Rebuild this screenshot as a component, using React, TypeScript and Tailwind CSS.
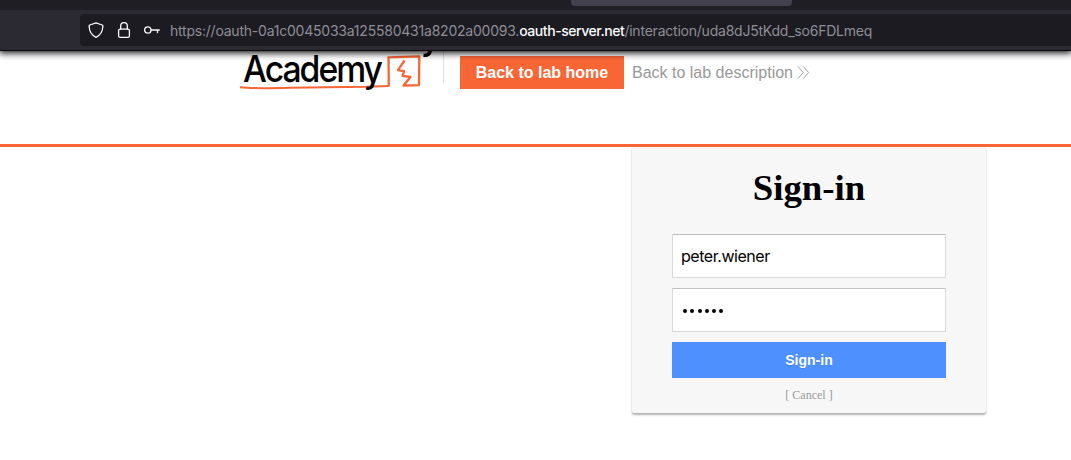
import React from "react";

function BrowserChrome() {
  return (
    <header className="relative z-10 h-[51px] border-b border-[#08080a] bg-[#2b2a33] shadow-[0_1px_7px_1px_rgba(0,0,0,0.95)]">
      <div className="h-[10px] bg-[#1f1e25] pl-[571px]">
        <div className="h-[6px] w-[221px] rounded-b-[4px] bg-[#42414d]" />
      </div>
      <div className="mt-1 ml-20 flex h-8 items-center rounded-l-[4px] bg-[#1c1b22] pl-2">
        <svg className="h-4 w-4 shrink-0" viewBox="0 0 16 16" fill="none" stroke="#fbfbfe" strokeWidth="1.3" strokeLinejoin="round">
          <path d="M8 .8 14.200 3c.5.2.7.5.7 1C14.700 9 12.300 13.300 8 15.300 3.700 13.300 1.300 9 1.100 4c0-.5.2-.8.7-1Z" />
        </svg>
        <svg className="ml-3 h-4 w-4 shrink-0" viewBox="0 0 16 16" fill="none" stroke="#fbfbfe" strokeWidth="1.3">
          <rect x="2.600" y="7.200" width="10.800" height="8.100" rx="1.600" />
          <path d="M4.700 7.200V4a3.300 3.300 0 0 1 6.600 0v3.200" />
        </svg>
        <svg className="ml-3 h-4 w-4 shrink-0" viewBox="0 0 16 16" fill="none" stroke="#fbfbfe" strokeWidth="1.300" strokeLinecap="round">
          <circle cx="3.800" cy="8" r="3.200" />
          <path d="M7 8h8.300M13.500 8v2.600" />
        </svg>
        <span className="ml-[10px] pt-[2px] whitespace-nowrap font-['Inter',sans-serif] text-[14px] leading-none tracking-[-0.222px] text-[#8f8e95]">
          https://oauth-0a1c0045033a125580431a8202a00093.<span className="font-medium tracking-[-0.440px] text-[#fbfbfe]">oauth-server.net</span>/interaction/uda8dJ5tKdd_so6FDLmeq
        </span>
      </div>
    </header>
  );
}

function AcademyLogo() {
  return (
    <svg className="block h-[50px] w-[200px] shrink-0" viewBox="240 51 200 50" fill="none">
      <path d="M240 87.200C252 88.900 270 88 290 87.700L366 86.800 388.800 86" stroke="#f86635" strokeWidth="2" />
      <path d="M388.800 86.500 388.500 57.300 419.300 56.300 419 85.200 403.500 85.500 410.500 77 402.600 75.900 404 71.200 398 70.200 404.500 60.500" stroke="#f86635" strokeWidth="2.300" strokeLinejoin="round" />
      <text x="243" y="82.300" fontSize="37" fontWeight="500" letterSpacing="-2.200" textLength="138" lengthAdjust="spacingAndGlyphs" fill="#000" className="font-['Inter',sans-serif]">Academy</text>
      <path d="M430.500 50C430 53.500 427.500 55.700 423.500 55.300" stroke="#000" strokeWidth="3.400" />
    </svg>
  );
}

function LabHeader() {
  return (
    <section className="flex h-24 items-start border-b-[3px] border-[#f86635] bg-white pl-60 font-['Liberation_Sans',sans-serif] text-[16px]">
      <AcademyLogo />
      <div className="ml-[3px] h-8 w-px bg-[#dedede]" />
      <a className="mt-[5px] ml-4 h-[33px] w-[164px] shrink-0 bg-[#f86635] text-center leading-[33px] font-bold text-white">Back to lab home</a>
      <a className="mt-[5px] ml-2 flex h-[33px] items-center whitespace-nowrap text-[#999]">
        Back to lab description
        <svg className="ml-1 h-[13px] w-[13px]" viewBox="0 0 13 13" fill="none" stroke="#999" strokeWidth="0.900">
          <path d="m1 .5 5.300 6L1 12.500M6.300.5l5.300 6-5.300 6" />
        </svg>
      </a>
    </section>
  );
}

function SignInCard() {
  return (
    <main className="ml-[632px] h-[266px] w-[354px] rounded-b-[2px] bg-[#f7f7f7] px-10 shadow-[0_2px_2px_rgba(0,0,0,0.3)]">
      <h1 className="pt-5 text-center font-['Liberation_Serif',serif] text-[36.800px] leading-[42px] font-bold text-black">Sign-in</h1>
      <form className="mt-[25px] flex flex-col gap-[10px]">
        <div className="flex h-11 items-center border border-[#d9d9d9] border-t-[#c0c0c0] bg-white px-2 font-['Inter',sans-serif] text-[16px] tracking-[-0.460px] text-black">peter.wiener</div>
        <div className="flex h-11 items-center gap-[3.300px] border border-[#d9d9d9] border-t-[#c0c0c0] bg-white pl-[10px]">
          {[0, 1, 2, 3, 4, 5].map((n) => (
            <span key={n} className="mt-[2px] h-[4px] w-[4px] rounded-full bg-black" />
          ))}
        </div>
        <button type="button" className="h-9 bg-[#4d90fe] font-['Liberation_Sans',sans-serif] text-[14px] font-bold text-white [text-shadow:0_1px_rgba(0,0,0,0.1)]">Sign-in</button>
      </form>
      <p className="mt-[10px] text-center font-['Liberation_Serif',serif] text-[12px] leading-[14px] text-[#999]">[ Cancel ]</p>
    </main>
  );
}

export default function App() {
  return (
    <div className="h-[460px] w-[1071px] overflow-hidden bg-white">
      <BrowserChrome />
      <LabHeader />
      <SignInCard />
    </div>
  );
}
